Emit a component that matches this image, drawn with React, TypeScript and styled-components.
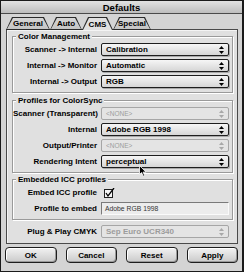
import React from "react";
import styled, { createGlobalStyle } from "styled-components";

const GlobalStyle = createGlobalStyle`
  html, body { margin: 0; padding: 0; background: #d4d4d4; }
  body { font-family: "Liberation Sans", Arial, sans-serif; }
  * { box-sizing: border-box; }
`;

const Window = styled.div`
  position: relative;
  width: 244px;
  height: 272px;
  border: 1px solid #1a1a1a;
  border-right-width: 2px;
  background: #d4d4d4;
  display: flex;
  flex-direction: column;
`;

const TitleBar = styled.div`
  height: 13px;
  border-bottom: 1px solid #4a4a4a;
  background: linear-gradient(#e2e2e2, #bdbdbd);
  display: flex;
  align-items: center;
  justify-content: center;
  font-weight: bold;
  font-size: 9.5px;
  color: #000;
`;

const Body = styled.div`
  padding: 3px 4px 0 5px;
  display: flex;
  flex-direction: column;
`;

const TabRow = styled.div`
  display: flex;
  height: 13px;
  margin-bottom: -1px;
  position: relative;
  z-index: 1;
`;

const trapezoid = "polygon(0 100%, 6px 0, calc(100% - 6px) 0, 100% 100%)";

const Tab = styled.div<{ $w: number; $active?: boolean }>`
  width: ${(p) => p.$w}px;
  height: 13px;
  background: #2a2a2a;
  clip-path: ${trapezoid};
  display: flex;
`;

const TabFace = styled.div<{ $active?: boolean }>`
  flex: 1;
  margin: 1px 1px ${(p) => (p.$active ? 0 : 1)}px 1px;
  clip-path: ${trapezoid};
  background: ${(p) =>
    p.$active ? "#e0e0e0" : "linear-gradient(#d6d6d6, #c4c4c4)"};
  display: flex;
  align-items: center;
  justify-content: center;
  font-weight: bold;
  font-size: 8px;
  color: #000;
`;

const Panel = styled.div`
  height: 215px;
  border: 1px solid #4a4a4a;
  background: #e0e0e0;
  box-shadow: inset 1px 1px 0 #f4f4f4;
  padding: 2px 4px 0 5px;
  display: flex;
  flex-direction: column;
`;

const Group = styled.fieldset<{ $mt?: number }>`
  margin: ${(p) => p.$mt ?? 0}px 0 0 0;
  padding: 0 3px 4px 0;
  min-inline-size: 0;
  border: 1px solid #9a9a9a;
  box-shadow: inset 1px 1px 0 #fff, 1px 1px 0 #fff;
`;

const Legend = styled.legend`
  margin-left: 3px;
  padding: 0 2px;
  background: #e0e0e0;
  font-weight: bold;
  font-size: 8px;
  line-height: 9px;
  color: #000;
`;

const Rows = styled.div`
  display: flex;
  flex-direction: column;
  gap: 3px;
  padding-top: 2px;
`;

const Row = styled.div<{ $mt?: number }>`
  display: grid;
  grid-template-columns: 84px 128px;
  column-gap: 4px;
  align-items: center;
  height: 13px;
  margin-top: ${(p) => p.$mt ?? 0}px;
  margin-left: ${(p) => (p.$mt ? 1 : 0)}px;
`;

const Label = styled.div`
  text-align: right;
  font-weight: bold;
  font-size: 8px;
  white-space: nowrap;
  color: #000;
`;

const Popup = styled.div<{ $disabled?: boolean }>`
  height: 13px;
  border: 1px solid ${(p) => (p.$disabled ? "#a6a6a6" : "#1e1e1e")};
  border-radius: 2px;
  background: ${(p) =>
    p.$disabled ? "#e4e4e4" : "linear-gradient(#f6f6f6, #d6d6d6)"};
  box-shadow: ${(p) => (p.$disabled ? "none" : "1px 1px 0 rgba(0,0,0,0.25)")};
  display: flex;
  align-items: center;
  padding-left: 4px;
  color: ${(p) => (p.$disabled ? "#9c9c9c" : "#000")};
`;

const PopupText = styled.span<{ $small?: boolean }>`
  font-weight: ${(p) => (p.$small ? "normal" : "bold")};
  font-size: ${(p) => (p.$small ? 6.5 : 8)}px;
  white-space: nowrap;
`;

const ArrowBox = styled.span`
  margin-left: auto;
  width: 14px;
  display: flex;
  align-items: center;
  justify-content: center;
`;

const Arrows = ({ color }: { color: string }) => (
  <svg width="5" height="8" viewBox="0 0 5 8">
    <polygon points="0,3 2.5,0 5,3" fill={color} />
    <polygon points="0,5 2.5,8 5,5" fill={color} />
  </svg>
);

const PopupMenu = ({
  value,
  disabled,
  small,
}: {
  value: string;
  disabled?: boolean;
  small?: boolean;
}) => (
  <Popup $disabled={disabled}>
    <PopupText $small={small}>{value}</PopupText>
    <ArrowBox>
      <Arrows color={disabled ? "#a8a8a8" : "#000"} />
    </ArrowBox>
  </Popup>
);

const CheckWrap = styled.div`
  display: flex;
  align-items: center;
  padding-left: 3px;
`;

const Check = () => (
  <svg width="11" height="10" viewBox="0 0 11 10">
    <rect x="0.5" y="1.5" width="8" height="8" fill="#f4f4f4" stroke="#1e1e1e" />
    <path d="M2 5 L4 8 L10 0" fill="none" stroke="#000" strokeWidth="1.3" />
  </svg>
);

const TextField = styled.div`
  height: 13px;
  border: 1px solid;
  border-color: #7a7a7a #fafafa #fafafa #7a7a7a;
  background: #ececec;
  display: flex;
  align-items: center;
  padding-left: 3px;
  font-size: 6.8px;
  color: #333;
  white-space: nowrap;
`;

const ButtonRow = styled.div`
  display: flex;
  gap: 9px;
  margin: 3px 0 0 -1px;
`;

const Button = styled.div`
  width: 52px;
  height: 16px;
  border: 1px solid #1e1e1e;
  border-radius: 4px;
  background: linear-gradient(#f2f2f2, #cacaca);
  box-shadow: inset 1px 1px 0 #fff, inset -1px -1px 0 #9a9a9a;
  display: flex;
  align-items: center;
  justify-content: center;
  font-weight: bold;
  font-size: 8px;
  color: #000;
`;

const Cursor = styled.svg`
  position: absolute;
  left: 138px;
  top: 164px;
`;

export default function App() {
  const tabs = [
    { name: "General", w: 44 },
    { name: "Auto", w: 32 },
    { name: "CMS", w: 31, active: true },
    { name: "Special", w: 38 },
  ];
  return (
    <>
      <GlobalStyle />
      <Window>
        <TitleBar>Defaults</TitleBar>
        <Body>
          <TabRow>
            {tabs.map((t) => (
              <Tab key={t.name} $w={t.w}>
                <TabFace $active={t.active}>{t.name}</TabFace>
              </Tab>
            ))}
          </TabRow>
          <Panel>
            <Group>
              <Legend>Color Management</Legend>
              <Rows>
                <Row>
                  <Label>Scanner -&gt; Internal</Label>
                  <PopupMenu value="Calibration" />
                </Row>
                <Row>
                  <Label>Internal -&gt; Monitor</Label>
                  <PopupMenu value="Automatic" />
                </Row>
                <Row>
                  <Label>Internal -&gt; Output</Label>
                  <PopupMenu value="RGB" />
                </Row>
              </Rows>
            </Group>
            <Group $mt={3}>
              <Legend>Profiles for ColorSync</Legend>
              <Rows>
                <Row>
                  <Label>Scanner (Transparent)</Label>
                  <PopupMenu value="<NONE>" disabled small />
                </Row>
                <Row>
                  <Label>Internal</Label>
                  <PopupMenu value="Adobe RGB 1998" />
                </Row>
                <Row>
                  <Label>Output/Printer</Label>
                  <PopupMenu value="<NONE>" disabled small />
                </Row>
                <Row>
                  <Label>Rendering Intent</Label>
                  <PopupMenu value="perceptual" />
                </Row>
              </Rows>
            </Group>
            <Group $mt={2}>
              <Legend>Embedded ICC profiles</Legend>
              <Rows>
                <Row>
                  <Label>Embed ICC profile</Label>
                  <CheckWrap>
                    <Check />
                  </CheckWrap>
                </Row>
                <Row>
                  <Label>Profile to embed</Label>
                  <TextField>Adobe RGB 1998</TextField>
                </Row>
              </Rows>
            </Group>
            <Row $mt={5}>
              <Label>Plug &amp; Play CMYK</Label>
              <PopupMenu value="Sep Euro UCR340" disabled />
            </Row>
          </Panel>
          <ButtonRow>
            <Button>OK</Button>
            <Button>Cancel</Button>
            <Button>Reset</Button>
            <Button>Apply</Button>
          </ButtonRow>
        </Body>
        <Cursor width="8" height="12" viewBox="0 0 8 12">
          <path
            d="M0.5 0.5 L0.5 9.5 L2.6 7.6 L4.2 11.2 L5.6 10.6 L4.1 7.1 L7 7.1 Z"
            fill="#000"
            stroke="#fff"
            strokeWidth="0.8"
          />
        </Cursor>
      </Window>
    </>
  );
}
